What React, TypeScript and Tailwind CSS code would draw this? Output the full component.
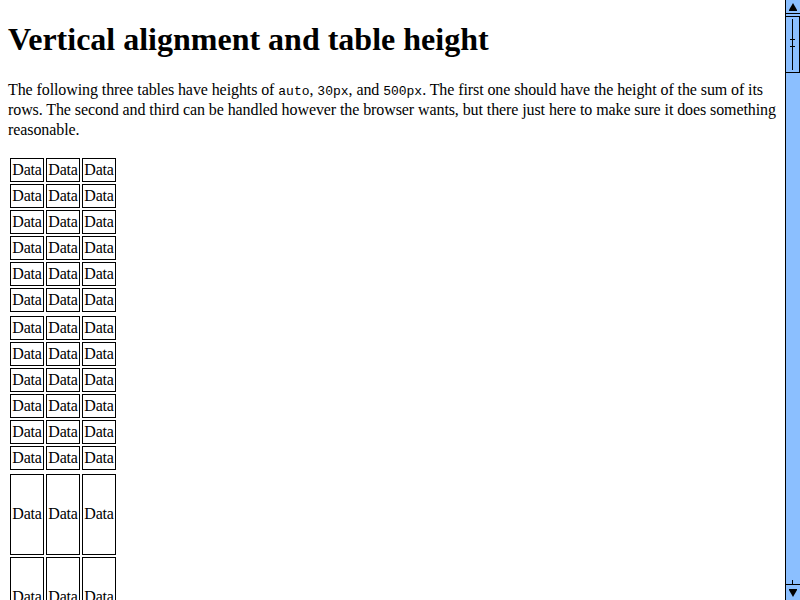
import React from "react";

function DataTable({ tall }: { tall?: boolean }) {
  const rows = Array.from({ length: 6 });
  return (
    <div
      className={
        tall
          ? "grid w-fit grid-cols-[34px_34px_34px] grid-rows-[repeat(6,1fr)] gap-[2px] p-[2px] h-[500px]"
          : "grid w-fit grid-cols-[34px_34px_34px] gap-[2px] p-[2px]"
      }
    >
      {rows.map((_, r) =>
        [0, 1, 2].map((c) => (
          <div
            key={`${r}-${c}`}
            className="flex items-center justify-center border border-black p-px leading-[20px] whitespace-nowrap tracking-[-0.2px]"
          >
            Data
          </div>
        ))
      )}
    </div>
  );
}

function Scrollbar() {
  return (
    <div className="flex h-[600px] w-[15px] shrink-0 flex-col border-l border-black bg-[#8bbfff]">
      <div className="flex h-[14px] items-center justify-center border-b border-black">
        <svg width="10" height="10" viewBox="0 0 10 10">
          <polygon points="5,1 9,8 1,8" fill="black" />
          <rect x="1" y="8" width="8" height="1" fill="black" />
        </svg>
      </div>
      <div className="mt-[2px] h-[57px] border border-black -ml-px flex justify-center">
        <svg width="13" height="55" viewBox="0 0 13 55">
          <rect x="6" y="2" width="1" height="51" fill="black" />
          <rect x="4" y="22" width="5" height="1" fill="black" />
          <rect x="4" y="29" width="5" height="1" fill="black" />
        </svg>
      </div>
      <div className="flex-1" />
      <div className="relative h-[16px] border-t border-black">
        <div className="absolute left-[6px] top-[-5px] h-[4px] w-px bg-black" />
        <div className="flex h-full items-center justify-center">
          <svg width="10" height="10" viewBox="0 0 10 10">
            <rect x="1" y="1" width="8" height="1" fill="black" />
            <polygon points="1,2 9,2 5,9" fill="black" />
          </svg>
        </div>
      </div>
    </div>
  );
}

export default function App() {
  const code = "font-['Liberation_Mono','Courier_New',monospace] text-[13px] leading-none tracking-normal font-light";
  return (
    <div className="flex h-[600px] w-[800px] overflow-hidden bg-white text-black font-['Liberation_Serif','Times_New_Roman',serif] text-[16px]">
      <div className="h-[600px] flex-1 overflow-hidden px-[8px]">
        <h1 className="mt-[21.44px] mb-[21.44px] text-[32px] font-bold leading-[37px]">
          Vertical alignment and table height
        </h1>
        <p className="mb-[16px] leading-[20px] tracking-[-0.09px]">
          The following three tables have heights of <code className={code}>auto</code>,{" "}
          <code className={code}>30px</code>, and <code className={code}>500px</code>. The first one
          should have the height of the sum of its rows. The second and third can be handled however
          the browser wants, but there just here to make sure it does something reasonable.
        </p>
        <DataTable />
        <DataTable />
        <DataTable tall />
      </div>
      <Scrollbar />
    </div>
  );
}
